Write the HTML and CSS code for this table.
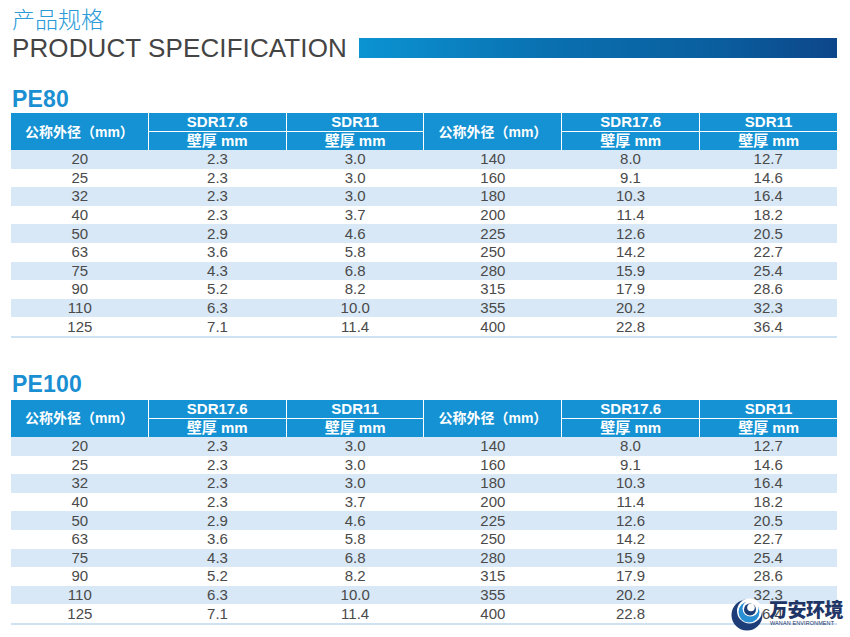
FILE: index.html
```html
<!DOCTYPE html>
<html lang="zh">
<head>
<meta charset="utf-8">
<link rel="stylesheet" href="styles.css">
</head>
<body>
<div class="page">
  <div class="title-cn">产品规格</div>
  <div class="title-row">
    <div class="title-en">PRODUCT SPECIFICATION</div>
    <div class="bar"></div>
  </div>

  <div class="section-title first">PE80</div>
  <div class="spec">
    <div class="thead">
      <div class="th span2">公称外径（mm）</div>
      <div class="th">SDR17.6</div>
      <div class="th">SDR11</div>
      <div class="th span2">公称外径（mm）</div>
      <div class="th">SDR17.6</div>
      <div class="th">SDR11</div>
      <div class="th">壁厚 mm</div>
      <div class="th">壁厚 mm</div>
      <div class="th">壁厚 mm</div>
      <div class="th">壁厚 mm</div>
    </div>
    <div class="tr alt"><span>20</span><span>2.3</span><span>3.0</span><span>140</span><span>8.0</span><span>12.7</span></div>
    <div class="tr"><span>25</span><span>2.3</span><span>3.0</span><span>160</span><span>9.1</span><span>14.6</span></div>
    <div class="tr alt"><span>32</span><span>2.3</span><span>3.0</span><span>180</span><span>10.3</span><span>16.4</span></div>
    <div class="tr"><span>40</span><span>2.3</span><span>3.7</span><span>200</span><span>11.4</span><span>18.2</span></div>
    <div class="tr alt"><span>50</span><span>2.9</span><span>4.6</span><span>225</span><span>12.6</span><span>20.5</span></div>
    <div class="tr"><span>63</span><span>3.6</span><span>5.8</span><span>250</span><span>14.2</span><span>22.7</span></div>
    <div class="tr alt"><span>75</span><span>4.3</span><span>6.8</span><span>280</span><span>15.9</span><span>25.4</span></div>
    <div class="tr"><span>90</span><span>5.2</span><span>8.2</span><span>315</span><span>17.9</span><span>28.6</span></div>
    <div class="tr alt"><span>110</span><span>6.3</span><span>10.0</span><span>355</span><span>20.2</span><span>32.3</span></div>
    <div class="tr"><span>125</span><span>7.1</span><span>11.4</span><span>400</span><span>22.8</span><span>36.4</span></div>
  </div>

  <div class="section-title second">PE100</div>
  <div class="spec">
    <div class="thead">
      <div class="th span2">公称外径（mm）</div>
      <div class="th">SDR17.6</div>
      <div class="th">SDR11</div>
      <div class="th span2">公称外径（mm）</div>
      <div class="th">SDR17.6</div>
      <div class="th">SDR11</div>
      <div class="th">壁厚 mm</div>
      <div class="th">壁厚 mm</div>
      <div class="th">壁厚 mm</div>
      <div class="th">壁厚 mm</div>
    </div>
    <div class="tr alt"><span>20</span><span>2.3</span><span>3.0</span><span>140</span><span>8.0</span><span>12.7</span></div>
    <div class="tr"><span>25</span><span>2.3</span><span>3.0</span><span>160</span><span>9.1</span><span>14.6</span></div>
    <div class="tr alt"><span>32</span><span>2.3</span><span>3.0</span><span>180</span><span>10.3</span><span>16.4</span></div>
    <div class="tr"><span>40</span><span>2.3</span><span>3.7</span><span>200</span><span>11.4</span><span>18.2</span></div>
    <div class="tr alt"><span>50</span><span>2.9</span><span>4.6</span><span>225</span><span>12.6</span><span>20.5</span></div>
    <div class="tr"><span>63</span><span>3.6</span><span>5.8</span><span>250</span><span>14.2</span><span>22.7</span></div>
    <div class="tr alt"><span>75</span><span>4.3</span><span>6.8</span><span>280</span><span>15.9</span><span>25.4</span></div>
    <div class="tr"><span>90</span><span>5.2</span><span>8.2</span><span>315</span><span>17.9</span><span>28.6</span></div>
    <div class="tr alt"><span>110</span><span>6.3</span><span>10.0</span><span>355</span><span>20.2</span><span>32.3</span></div>
    <div class="tr"><span>125</span><span>7.1</span><span>11.4</span><span>400</span><span>22.8</span><span>36.4</span></div>
  </div>

  <div class="logo">
    <svg class="logo-mark" width="34" height="34" viewBox="0 0 34 34">
      <circle cx="16" cy="18" r="15.5" fill="#1c3d77"/>
      <circle cx="18.5" cy="14" r="12.5" fill="#ffffff"/>
      <circle cx="18" cy="15" r="10.5" fill="#2a8fd3"/>
      <circle cx="19.5" cy="11.5" r="8" fill="#ffffff"/>
      <circle cx="19" cy="12.5" r="6" fill="#1c3d77"/>
      <circle cx="20" cy="10.5" r="3.8" fill="#ffffff"/>
    </svg>
    <div class="logo-text">
      <div class="logo-cn">万安环境</div>
      <div class="logo-en">WANAN ENVIRONMENT</div>
    </div>
  </div>
</div>
</body>
</html>
```

FILE: styles.css
```css
html, body {
  margin: 0;
  padding: 0;
  background: #ffffff;
}

.page {
  position: relative;
  width: 850px;
  height: 637px;
  overflow: hidden;
  padding: 5px 12px 0 11px;
  box-sizing: border-box;
  font-family: "Liberation Sans", "Noto Sans CJK SC", sans-serif;
}

.title-cn {
  font-family: "Noto Sans CJK SC", sans-serif;
  font-weight: 300;
  font-size: 23px;
  line-height: 26px;
  color: #2a9ad8;
  padding-left: 1px;
}

.title-row {
  display: flex;
  align-items: flex-start;
  margin-top: 4px;
}

.title-en {
  font-size: 26px;
  line-height: 27px;
  color: #444444;
  letter-spacing: 0.1px;
  padding-left: 1px;
  white-space: nowrap;
}

.bar {
  flex: 1;
  height: 20px;
  margin-top: 3px;
  margin-left: 12px;
  margin-right: 1px;
  background: linear-gradient(90deg, #0b93d2 0%, #0a70b0 40%, #0a5e9e 75%, #0d468a 100%);
}

.section-title {
  font-weight: bold;
  font-size: 23px;
  line-height: 22px;
  color: #1a8fd2;
  padding-left: 1px;
  letter-spacing: 0.2px;
}

.section-title.first {
  margin-top: 26px;
  margin-bottom: 3px;
}

.section-title.second {
  margin-top: 35px;
  margin-bottom: 5px;
}

.spec {
  width: 826px;
  border-bottom: 2px solid #cfe2f3;
}

.thead {
  display: grid;
  grid-template-columns: repeat(6, 1fr);
  grid-template-rows: 18px 18px;
  gap: 1px;
  background: #ffffff;
}

.th {
  background: #1592d3;
  color: #ffffff;
  font-weight: bold;
  font-size: 15px;
  display: flex;
  align-items: center;
  justify-content: center;
  line-height: 18px;
}

.th.span2 {
  grid-row: span 2;
  font-size: 14px;
}

.tr {
  display: grid;
  grid-template-columns: repeat(6, 1fr);
  height: 18.6px;
  align-items: center;
  font-size: 15px;
  color: #4a4a4a;
}

.tr span {
  text-align: center;
  line-height: 18px;
}

.tr.alt {
  background: #d8e8f6;
}

.logo {
  position: absolute;
  left: 731px;
  top: 597px;
  display: flex;
  align-items: flex-start;
  gap: 4px;
}

.logo-mark {
  display: block;
}

.logo-text {
  display: flex;
  flex-direction: column;
  padding-top: 1px;
}

.logo-cn {
  font-family: "Noto Sans CJK SC", sans-serif;
  font-weight: 900;
  font-size: 19px;
  line-height: 22px;
  color: #1e3565;
  letter-spacing: -0.5px;
}

.logo-en {
  font-size: 5.5px;
  line-height: 7px;
  color: #1e3565;
  letter-spacing: 0.1px;
  padding-left: 1px;
  white-space: nowrap;
}
```
